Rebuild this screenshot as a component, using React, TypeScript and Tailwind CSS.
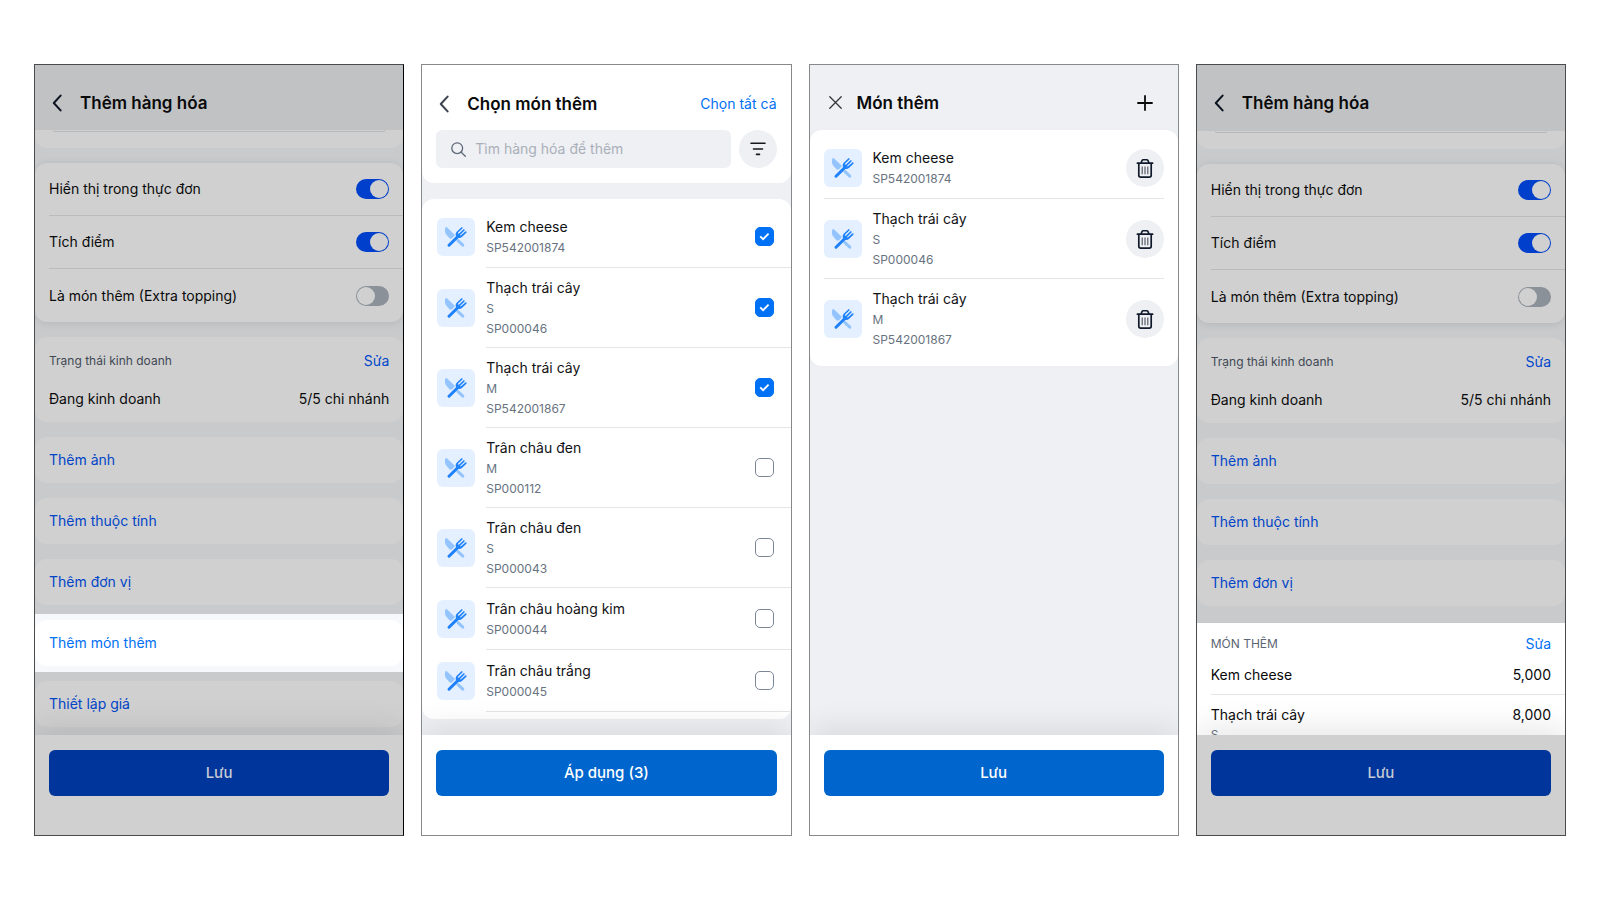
import type { ReactNode } from "react";

type Item = { name: string; size?: string; code: string; checked?: boolean };

const toppings: Item[] = [
  { name: "Kem cheese", code: "SP542001874", checked: true },
  { name: "Thạch trái cây", size: "S", code: "SP000046", checked: true },
  { name: "Thạch trái cây", size: "M", code: "SP542001867", checked: true },
  { name: "Trân châu đen", size: "M", code: "SP000112" },
  { name: "Trân châu đen", size: "S", code: "SP000043" },
  { name: "Trân châu hoàng kim", code: "SP000044" },
  { name: "Trân châu trắng", code: "SP000045" },
];

function BackIcon() {
  return (
    <svg width="10" height="18" viewBox="0 0 10 18" fill="none" stroke="currentColor" strokeWidth="2" strokeLinecap="round" strokeLinejoin="round">
      <path d="M8.6 1.6 1.8 9l6.8 7.4" />
    </svg>
  );
}

function DishIcon() {
  return (
    <span className="flex size-[38px] shrink-0 rounded-md bg-[#e4f0ff]">
      <svg width="38" height="38" viewBox="0 0 38 38" fill="none">
        <path d="M8.4 9.4C7.400 12 7.800 15.400 10 17.600l2.800 2.800c.7.6 1.600.5 2.200-.1l2.500-2.500c.4-.4.4-1 0-1.400L9.900 9.200c-.5-.5-1.200-.4-1.500.2Z" fill="#94c4fd" />
        <path d="m21 22.600 4.800 4.500" stroke="#94c4fd" strokeWidth="3" strokeLinecap="round" />
        <path d="M12 27.200 21 18.400" stroke="#1f82fb" strokeWidth="3" strokeLinecap="round" />
        <path d="m24.800 10-4.200 4c-1.200 1.300-1.300 3-.3 4.100 1.200 1.100 3.100 1 4.300-.1l4.200-3.900" stroke="#1f82fb" strokeWidth="1.700" strokeLinecap="round" />
        <path d="m22.400 16.400 4.500-4.400" stroke="#1f82fb" strokeWidth="1.700" strokeLinecap="round" />
        <path d="m20.500 14.800 3.300 3-2.700 1.200-1.600-1.500Z" fill="#1f82fb" />
      </svg>
    </span>
  );
}

function TrashIcon() {
  return (
    <svg width="38" height="38" viewBox="0 0 38 38" fill="none" stroke="#111a2c">
      <path d="M11.400 14.200h15.200" strokeWidth="1.700" strokeLinecap="round" />
      <path d="m15 14 1-2.400c.2-.5.600-.8 1.200-.8h3.600c.6 0 1 .3 1.200.8l1 2.400" strokeWidth="1.600" />
      <path d="M12.800 14.500v11.700c0 1.100.8 1.900 1.900 1.900h8.600c1.100 0 1.900-.8 1.900-1.900V14.500" strokeWidth="1.700" />
      <path d="M16.200 17.400v7.800M19 17.400v7.800M21.800 17.400v7.800" strokeWidth="1.100" stroke="#4c5361" />
    </svg>
  );
}

function Phone({ className, children }: { className: string; children: ReactNode }) {
  return (
    <section className={`flex min-h-0 min-w-0 flex-col overflow-hidden border ${className}`}>
      {children}
    </section>
  );
}

function Footer({ label, dim }: { label: string; dim?: boolean }) {
  return (
    <footer className={`relative h-[100px] shrink-0 px-3.5 pt-[15px] shadow-[0_-8px_28px_rgba(0,0,0,0.09)] ${dim ? "bg-[#d0d0d0]" : "bg-white"}`}>
      <button type="button" className={`h-[46px] w-full rounded-md text-[15px] font-medium ${dim ? "bg-[#00359b] text-[#c6cad4]" : "bg-[#0065cc] text-white"}`}>
        {label}
      </button>
    </footer>
  );
}

function SwitchRow({ id, label, on, last }: { id: string; label: string; on?: boolean; last?: boolean }) {
  return (
    <div className={`ml-3.5 flex h-[53px] items-center justify-between pr-3.5 ${last ? "" : "border-b border-[#b9bbbd]"}`}>
      <label htmlFor={id}>{label}</label>
      <input
        id={id}
        type="checkbox"
        role="switch"
        defaultChecked={on}
        className="h-5 w-[33px] appearance-none rounded-full bg-[#8b9199] p-px before:block before:size-[18px] before:rounded-full before:bg-[#d0d0d0] checked:bg-[#003fcb] checked:before:ml-auto"
      />
    </div>
  );
}

function LinkCard({ label, lit }: { label: string; lit?: boolean }) {
  return (
    <div className={`flex h-[46px] shrink-0 items-center rounded-xl px-3.5 ${lit ? "bg-white text-[#0070f4]" : "bg-[#d0d0d0] text-[#0044c8]"}`}>
      <a href="#">{label}</a>
    </div>
  );
}

function ProductHeader({ className }: { className: string }) {
  return (
    <header className={`flex shrink-0 items-center gap-[18px] bg-[#c1c2c4] pl-[17px] pt-2.5 ${className}`}>
      <button type="button" aria-label="Quay lại" className="text-[#0c1220]"><BackIcon /></button>
      <h2 className="text-[17px] leading-6 font-semibold">Thêm hàng hóa</h2>
    </header>
  );
}

function ProductCards({ prefix }: { prefix: string }) {
  return (
    <>
      <div className="h-[18px] shrink-0 rounded-b-xl bg-[#d0d0d0] px-[18px]">
        <div className="h-0.5 rounded-b-md border-x border-b border-[#b6b8ba]" />
      </div>
      <div className="shrink-0 rounded-xl bg-[#d0d0d0] shadow-[0_1px_8px_rgba(0,0,0,0.1)]">
        <SwitchRow id={`${prefix}-menu`} label="Hiển thị trong thực đơn" on />
        <SwitchRow id={`${prefix}-points`} label="Tích điểm" on />
        <SwitchRow id={`${prefix}-extra`} label="Là món thêm (Extra topping)" last />
      </div>
      <div className="flex h-[85px] shrink-0 flex-col gap-[18px] rounded-xl bg-[#d0d0d0] px-3.5 pt-3.5">
        <div className="flex items-center justify-between">
          <h3 className="text-xs leading-5 text-[#3f4854]">Trạng thái kinh doanh</h3>
          <a href="#" className="text-[#0046cc]">Sửa</a>
        </div>
        <div className="flex items-center justify-between">
          <span>Đang kinh doanh</span>
          <span>5/5 chi nhánh</span>
        </div>
      </div>
      <LinkCard label="Thêm ảnh" />
      <LinkCard label="Thêm thuộc tính" />
      <LinkCard label="Thêm đơn vị" />
    </>
  );
}

function ItemText({ item }: { item: Item }) {
  return (
    <span className="flex min-w-0 flex-1 flex-col text-xs leading-5 text-[#687280]">
      <span className="text-sm leading-[22px] text-[#111214]">{item.name}</span>
      {item.size && <span>{item.size}</span>}
      <span>{item.code}</span>
    </span>
  );
}

function PickRow({ item }: { item: Item }) {
  return (
    <li>
      <label className={`flex items-center gap-[11px] pl-[15px] ${item.size ? "h-20" : "h-[62px]"}`}>
        <DishIcon />
        <span className="flex h-full flex-1 items-center border-b border-[#e4e5e7] pr-[17px]">
          <ItemText item={item} />
          <span className="grid place-items-center">
            <input
              type="checkbox"
              defaultChecked={item.checked}
              className="peer col-start-1 row-start-1 size-[19px] appearance-none rounded-[5px] border border-[#7c8796] bg-white checked:border-[#0070f4] checked:bg-[#0070f4]"
            />
            <svg width="11" height="9" viewBox="0 0 11 9" fill="none" stroke="#fff" strokeWidth="1.800" className="pointer-events-none col-start-1 row-start-1 invisible peer-checked:visible">
              <path d="m1.200 4.400 2.900 2.800 5.500-5.500" />
            </svg>
          </span>
        </span>
      </label>
    </li>
  );
}

export default function App() {
  return (
    <main className="grid h-screen grid-cols-4 gap-[17px] bg-white px-[34px] py-16 font-[Inter,sans-serif] text-sm leading-5 text-[#0a0a0b]">
      <Phone className="border-[#4a4b4c] border-r-black bg-[#c8cacc]">
        <ProductHeader className="h-[65px]" />
        <div className="flex min-h-0 flex-1 flex-col gap-[15px] overflow-hidden">
          <ProductCards prefix="start" />
          <div className="-my-1.5 shrink-0 bg-[#f6f8fb] py-1.5">
            <LinkCard label="Thêm món thêm" lit />
          </div>
          <LinkCard label="Thiết lập giá" />
        </div>
        <Footer label="Lưu" dim />
      </Phone>

      <Phone className="border-[#86888a] bg-[#eff0f3]">
        <header className="h-[118px] shrink-0 rounded-b-xl bg-white px-3.5">
          <div className="flex h-[65px] items-center gap-[18px] pl-[3px] pt-3">
            <button type="button" aria-label="Quay lại" className="text-[#3b424e]"><BackIcon /></button>
            <h2 className="flex-1 text-[17px] leading-6 font-semibold">Chọn món thêm</h2>
            <button type="button" className="text-[#0070f4]">Chọn tất cả</button>
          </div>
          <div className="flex gap-2">
            <div className="flex h-[38px] min-w-0 flex-1 items-center gap-[9px] rounded-md bg-[#eff0f3] pl-[15px]">
              <svg width="15" height="15" viewBox="0 0 15 15" fill="none" stroke="#5d6878" strokeWidth="1.300" strokeLinecap="round">
                <circle cx="6.200" cy="6.200" r="5.400" />
                <path d="m10.200 10.200 4.100 4.100" />
              </svg>
              <input type="text" aria-label="Tìm hàng hóa để thêm" placeholder="Tìm hàng hóa để thêm" className="min-w-0 flex-1 bg-transparent outline-none placeholder:text-[#a9afba]" />
            </div>
            <button type="button" aria-label="Lọc" className="flex size-[38px] items-center justify-center rounded-full bg-[#eff0f3]">
              <svg width="16" height="14" viewBox="0 0 16 14" stroke="#15181e" strokeWidth="1.600" strokeLinecap="round">
                <path d="M1 1.300h14M3.500 7h9M6.500 12.400h3" />
              </svg>
            </button>
          </div>
        </header>
        <div className="min-h-0 flex-1 pt-4 pb-4">
          <ul className="h-full overflow-hidden rounded-xl bg-white pt-[7px]">
            {toppings.map((item) => (
              <PickRow key={item.code} item={item} />
            ))}
          </ul>
        </div>
        <Footer label="Áp dụng (3)" />
      </Phone>

      <Phone className="border-[#86888a] bg-[#eff0f3]">
        <header className="flex h-[65px] shrink-0 items-center gap-[15px] pt-2.5 pr-6 pl-[19px]">
          <button type="button" aria-label="Đóng">
            <svg width="13" height="13" viewBox="0 0 13 13" stroke="#33373d" strokeWidth="1.300" strokeLinecap="round">
              <path d="m.8.8 11.400 11.400M12.200.8.800 12.200" />
            </svg>
          </button>
          <h2 className="flex-1 text-[17px] leading-6 font-semibold">Món thêm</h2>
          <button type="button" aria-label="Thêm">
            <svg width="18" height="18" viewBox="0 0 18 18" stroke="#0a0a0b" strokeWidth="1.800">
              <path d="M9 1.300v15.400M1.300 9h15.400" />
            </svg>
          </button>
        </header>
        <div className="min-h-0 flex-1">
          <ul className="rounded-xl bg-white px-3.5 py-[7px]">
            {toppings.slice(0, 3).map((item) => (
              <li key={item.code} className={`flex items-center gap-[11px] border-b border-[#e4e5e7] last:border-transparent ${item.size ? "h-20" : "h-[62px]"}`}>
                <DishIcon />
                <ItemText item={item} />
                <button type="button" aria-label={`Xóa ${item.name}`} className="rounded-full bg-[#eff0f3]"><TrashIcon /></button>
              </li>
            ))}
          </ul>
        </div>
        <Footer label="Lưu" />
      </Phone>

      <Phone className="border-[#4a4b4c] bg-[#c8cacc]">
        <ProductHeader className="h-[66px]" />
        <div className="flex min-h-0 flex-1 flex-col gap-[15px] overflow-hidden">
          <ProductCards prefix="done" />
          <div className="shrink-0 border-t-2 border-[#c8cacc] bg-white">
            <div className="flex h-8 items-center justify-between px-3.5 pt-[10px]">
              <h3 className="text-xs leading-5 text-[#5b6573]">MÓN THÊM</h3>
              <a href="#" className="text-[#0070f4]">Sửa</a>
            </div>
            <div className="ml-3.5 flex justify-between border-b border-[#e4e5e7] pt-[10px] pr-3.5 pb-[9px]">
              <span>Kem cheese</span>
              <span>5,000</span>
            </div>
            <div className="ml-3.5 flex justify-between pt-[10px] pr-3.5 pb-[9px]">
              <span className="flex flex-col">
                Thạch trái cây
                <span className="text-xs leading-5 text-[#687280]">S</span>
              </span>
              <span>8,000</span>
            </div>
          </div>
        </div>
        <Footer label="Lưu" dim />
      </Phone>
    </main>
  );
}
